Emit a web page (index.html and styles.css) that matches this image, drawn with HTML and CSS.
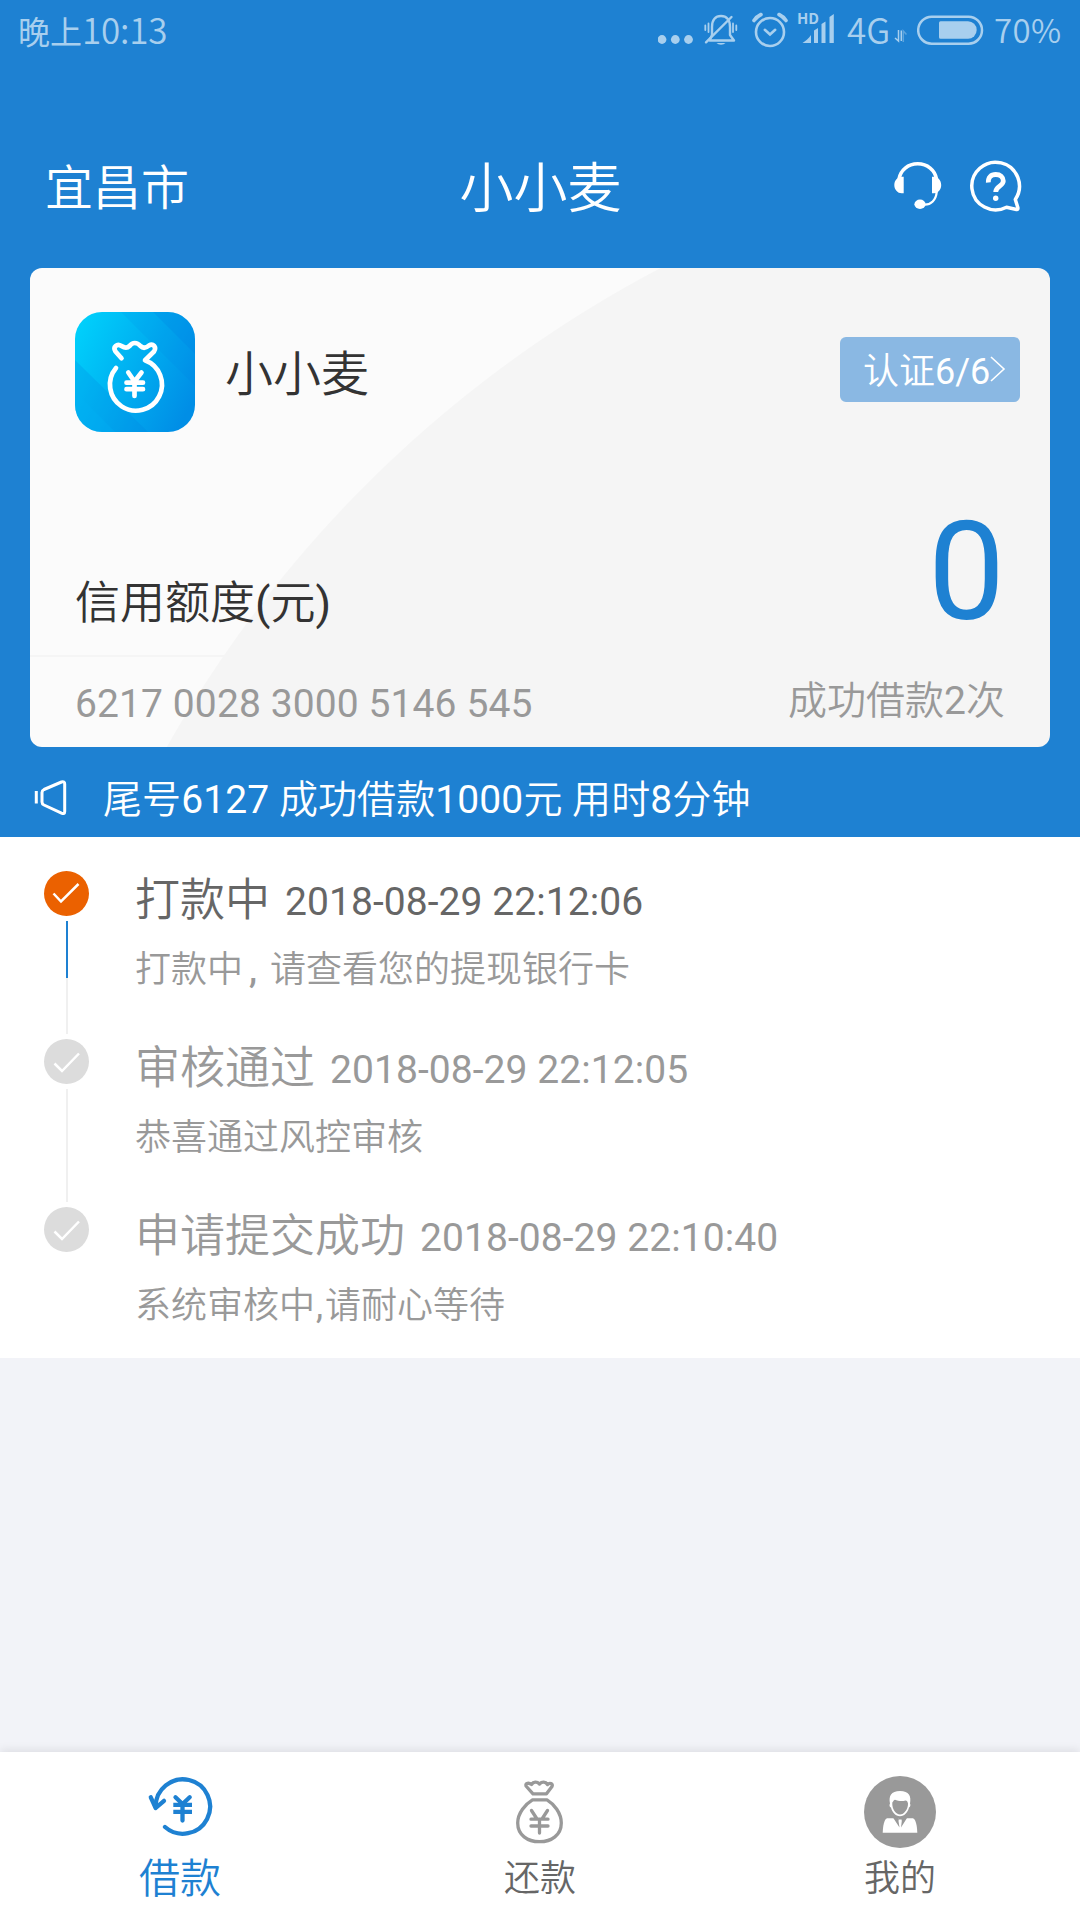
FILE: index.html
```html
<!DOCTYPE html>
<html lang="zh-CN">
<head>
<meta charset="utf-8">
<title>小小麦</title>
<link rel="stylesheet" href="styles.css">
</head>
<body>
<div class="app">
  <div class="status">
    <div class="clock">晚上<span class="digits">10:13</span></div>
    <div class="indicators">
      <svg class="ind-dots" width="36" height="60" viewBox="658 0 36 60" fill="currentColor"><circle cx="662" cy="39.5" r="4.4"/><circle cx="675.3" cy="39.5" r="4.4"/><circle cx="688.5" cy="39.5" r="4.4"/></svg>
      <svg class="ind-bell" width="34" height="60" viewBox="704 0 34 60" fill="none" stroke="currentColor" stroke-width="2.4" stroke-linecap="round"><path d="M709.5 40.5h24.5l-4-5.5V27c0-7-3.500-11-9-11s-9 4-9 11v8z" stroke-linejoin="round"/><path d="M706 42.300L731.500 17"/><path d="M716.500 43h9a5.200 3.500 0 0 1-9 0z" fill="currentColor" stroke="none"/><path d="M705.300 25.500v4.500M708.500 23.500v8.500M733 23.500v8.500M736.300 25.500v4.500" stroke-width="1.800"/></svg>
      <svg class="ind-alarm" width="36" height="60" viewBox="752 0 36 60" fill="none" stroke="currentColor" stroke-width="2.600" stroke-linecap="round"><circle cx="770" cy="32" r="14"/><path d="M764.800 29.800l5.200 4.700 5.200-4.700"/><path d="M754 20.500q2.800-4 7-6M786 20.500q-2.800-4-7-6" stroke-width="3.600"/></svg>
      <svg class="ind-signal" width="38" height="60" viewBox="797 0 38 60" fill="currentColor"><text class="hd" x="797" y="23.800">HD</text><path d="M802.500 43c3.500-2.500 6-4.500 8.500-8v8zM814 43V30.500l4-2.500v15zM821.500 43V24l4-2.500V43zM829.500 43V17l4.300-3v29z"/></svg>
      <span class="net">4G</span>
      <svg class="ind-data" width="13" height="60" viewBox="895 0 13 60" fill="none" stroke="currentColor" stroke-width="1.500"><path d="M899.500 30v11l-3.500-3M902.300 30.500V41"/><path d="M904.300 42V31l3.200 3.500" opacity=".45"/></svg>
      <svg class="ind-battery" width="67" height="60" viewBox="917 0 67 60"><rect x="918.200" y="16.700" width="63.800" height="27" rx="13.500" fill="none" stroke="currentColor" stroke-width="2.500"/><path d="M940.500 21.300H968a8.700 8.700 0 0 1 0 17.400h-27.500q-1.500 0-1.500-1.500V22.800q0-1.500 1.500-1.500z" fill="currentColor"/></svg>
      <span class="percent">70%</span>
    </div>
  </div>

  <header class="header">
    <span class="city">宜昌市</span>
    <h1 class="title">小小麦</h1>
    <div class="actions">
      <svg width="56" height="56" viewBox="0 0 56 56" fill="#fff"><path d="M9 21C10.500 12 18 5.800 27.700 5.800S45 12 46.500 21" fill="none" stroke="#fff" stroke-width="3.600"/><path d="M13.700 18.700v16.600h-2C7.500 35.300 4.300 31.500 4.300 27s3.200-8.300 7.400-8.300zM42 18.700v16.600h2c4.200 0 7.200-3.800 7.200-8.300s-3-8.300-7.200-8.300z"/><path d="M46.700 34C46 42 41 47 34 46.600" fill="none" stroke="#fff" stroke-width="2.300"/><ellipse cx="30" cy="46.300" rx="5.600" ry="4.700"/></svg>
      <svg width="60" height="60" viewBox="0 0 60 60" fill="none" stroke="#fff" stroke-linecap="round" stroke-linejoin="round"><path d="M49.300 43.400A23.800 23.800 0 1 0 40.500 51.200L50.500 53.500Q52.300 53.700 51.800 51.500Z" stroke-width="3.500"/><path d="M22.300 26.500C22 21.500 25 18.500 29.700 18.500C34.400 18.500 37.300 21 37.300 25C37.300 30 29.700 30.500 29.700 36" stroke-width="4.800" stroke-linecap="butt"/><circle cx="29.700" cy="42.300" r="2.700" fill="#fff" stroke="none"/></svg>
    </div>
  </header>

  <section class="card">
    <div class="card-top">
      <svg class="logo" width="120" height="120" viewBox="0 0 120 120">
        <defs>
          <linearGradient id="logoFill" x1="0" y1="0.200" x2="1" y2="0.700"><stop offset="0" stop-color="#00cffb"/><stop offset="1" stop-color="#008ee6"/></linearGradient>
          <clipPath id="logoClip"><rect width="120" height="120" rx="27"/></clipPath>
        </defs>
        <g clip-path="url(#logoClip)">
          <rect width="120" height="120" fill="url(#logoFill)"/>
          <path d="M0 48L73 120H0z" fill="#0080e0" opacity=".22"/><path d="M0 80L40 120H0z" fill="#00b4f5" opacity=".3"/>
          <path d="M46 0L120 74V0z" fill="#0078e0" opacity=".1"/><path d="M78 0L120 42V0z" fill="#0078e0" opacity=".2"/>
        </g>
        <g fill="none" stroke="#fff" stroke-width="4.700" stroke-linecap="round" stroke-linejoin="round">
          <path d="M41 56A26 26 0 1 0 70 48.300L79 39.500C82 35 78 31 74 33.500C71 36 68 36.500 65.500 34C62 30 57.500 30 54.500 34C52 36.500 49.500 36 46.500 34C42 31 37.500 35 40.500 39.500L46.500 46.300"/>
          <path d="M53.300 60.500L59.500 69.500L66.500 60.500M59.500 69.500V84M51.500 70.700H68M51.500 77.200H68"/>
        </g>
      </svg>
      <span class="name">小小麦</span>
      <a class="badge"><span>认证<b>6/6</b></span><svg width="16" height="26" viewBox="0 0 16 26" fill="none" stroke="#fff" stroke-width="1.600"><path d="M1 1l13 12L1 25"/></svg></a>
    </div>
    <div class="quota">
      <span class="quota-label">信用额度<b>(</b>元<b>)</b></span>
      <span class="quota-value">0</span>
    </div>
    <div class="divider"></div>
    <div class="card-foot">
      <span class="number">6217 0028 3000 5146 545</span>
      <span class="times">成功借款<b>2</b>次</span>
    </div>
  </section>

  <div class="notice">
    <svg width="36" height="44" viewBox="0 0 36 44" fill="none" stroke="#fff" stroke-width="3"><path d="M4.300 15v12.500"/><path d="M10 16.500Q10 14.500 12 13.500L29.500 6Q32.700 5 32.700 8V35.500Q32.700 38.500 29.500 37.200L12 29Q10 28 10 26Z" stroke-linejoin="round"/></svg>
    <span>尾号<b>6127</b> 成功借款<b>1000</b>元 用时<b>8</b>分钟</span>
  </div>

  <ol class="timeline">
    <li class="step current">
      <div class="rail"><svg class="mark" width="45" height="45" viewBox="0 0 45 45"><circle cx="22.500" cy="22.500" r="22.500"/><path d="M9.500 22.500l7.500 8L34.500 13"/></svg><i class="line"></i></div>
      <div class="body"><p class="head">打款中<time>2018-08-29 22:12:06</time></p><p class="desc">打款中<span class="comma">,</span>请查看您的提现银行卡</p></div>
    </li>
    <li class="step">
      <div class="rail"><svg class="mark" width="45" height="45" viewBox="0 0 45 45"><circle cx="22.500" cy="22.500" r="22.500"/><path d="M10.500 24.500l7.500 7.500L35 14.500"/></svg><i class="line"></i></div>
      <div class="body"><p class="head">审核通过<time>2018-08-29 22:12:05</time></p><p class="desc">恭喜通过风控审核</p></div>
    </li>
    <li class="step">
      <div class="rail"><svg class="mark" width="45" height="45" viewBox="0 0 45 45"><circle cx="22.500" cy="22.500" r="22.500"/><path d="M10.500 24.500l7.500 7.500L35 14.500"/></svg></div>
      <div class="body"><p class="head">申请提交成功<time>2018-08-29 22:10:40</time></p><p class="desc">系统审核中<span class="comma-narrow">,</span>请耐心等待</p></div>
    </li>
  </ol>

  <nav class="tabs">
    <a class="tab active">
      <svg width="72" height="72" viewBox="0 0 72 72" fill="none" stroke="currentColor" stroke-width="4.300" stroke-linecap="round"><path d="M11.700 31A27.200 27.200 0 1 1 21 51"/><path d="M6.800 21.300L11.700 32L20 24.800" stroke-linejoin="round"/><path d="M31.500 21.300L38.500 28L45.700 21.300M38.500 28V44.500"/><path d="M29.300 28.800H48M29.300 35.800H48" stroke-linecap="butt"/></svg>
      <span>借款</span>
    </a>
    <a class="tab">
      <svg width="72" height="72" viewBox="0 0 72 72" fill="none" stroke="#999" stroke-width="3.300" stroke-linecap="round" stroke-linejoin="round"><path d="M29 17.800H42.500L48 10.500C49.500 7.500 45.500 6.500 43.500 8.500C41.500 5.500 38 5.500 35.500 8C33 5.500 29.500 5.500 27.500 8.500C25 6.500 21 7 22 10Z"/><path d="M28.500 23.800H43C50 28 57.300 37 57.300 47C57.300 59 47.500 65.700 35.500 65.700S13.700 59 13.700 47C13.700 37 21.500 28 28.500 23.800Z"/><path d="M27.500 34.500L33 43M43.500 34.500L38 43M35.500 44V57M27 43.200H44M27 50H44"/></svg>
      <span>还款</span>
    </a>
    <a class="tab">
      <svg width="72" height="72" viewBox="0 0 72 72" fill="#fff"><circle cx="36" cy="36" r="36" fill="#999"/><path d="M26 27.500C24.500 20 27 15 36 15S47.500 20 46 27.500C47 29 46 31 45 31.500C44 36 40.500 40.300 36 40.300S28 36 27 31.500C25.500 31 25 29 26 27.500Z"/><path d="M28.300 26.500C29.500 25 30 24 31 23.800C34 25 38 25.500 41.500 24.500C43 24.500 43.500 25.500 44 27.500C44.300 33 40 38.600 36 38.600S27.800 33 28.300 26.500Z" fill="#999"/><path d="M18.700 56.700C19 50 20 43.500 23 42.200H49C52 43.500 53 50 53.300 56.700Z"/><path d="M29.300 42L35.500 51.500L34.500 45L35 42zM43 42L37 51.500L37.800 45L37.300 42zM34.800 42h2.700l.2 1.500h-3z" fill="#999"/></svg>
      <span>我的</span>
    </a>
  </nav>
</div>
</body>
</html>
```
FILE: styles.css
```css
* { box-sizing: border-box; margin: 0; padding: 0; }

body {
  background: #f2f3f8;
  font-family: Roboto, "Noto Sans CJK SC", sans-serif;
  font-weight: 350;
  color: #333;
}

.app {
  width: 1080px;
  height: 1920px;
  display: flex;
  flex-direction: column;
  background: linear-gradient(#1e81d2 837px, #f2f3f8 837px);
}

.app svg { display: block; flex: none; }

/* Latin digits and brackets inside Chinese text */
b { font-weight: 400; }

.status {
  height: 60px;
  display: flex;
  justify-content: space-between;
  padding: 0 18px;
  color: #a8cfee;
  font-family: "Noto Sans CJK SC", sans-serif;
  white-space: nowrap;
}
.clock { font-size: 32px; line-height: 58px; font-weight: 400; }
.digits { font-size: 35px; font-weight: 350; letter-spacing: -.2px; }
.indicators { display: flex; font-size: 33px; line-height: 58px; }
.ind-bell { margin-left: 10px; }
.ind-alarm { margin-left: 14px; }
.ind-signal { margin-left: 9px; overflow: visible; }
.hd { font: 700 15px "Noto Sans CJK SC", sans-serif; }
.net { width: 47px; margin-left: 12px; font-size: 35px; }
.ind-battery { margin-left: 10px; }
.percent { width: 68px; margin-left: 10px; letter-spacing: .4px; }

.header {
  height: 160px;
  margin-top: 48px;
  display: grid;
  grid-template-columns: 1fr auto 1fr;
  align-items: center;
  padding: 0 54px 0 45px;
  color: #fff;
}
.city { font-size: 48px; line-height: 60px; padding-top: 2px; }
.title { font-size: 54px; line-height: 60px; font-weight: 350; padding: 4px 0 0 10px; }
.actions { display: flex; align-items: center; justify-content: flex-end; gap: 20px; padding-bottom: 5px; }

.card {
  height: 479px;
  margin: 0 30px;
  border-radius: 12px;
  background: radial-gradient(circle at 1195px 1076px, #f5f5f5 1214.500px, #fbfbfb 1215.500px);
  display: flex;
  flex-direction: column;
}
.card-top { display: flex; align-items: center; height: 120px; margin: 44px 30px 0 45px; }
.name { font-size: 48px; line-height: 60px; margin-left: 30px; padding-top: 5px; }
.badge {
  width: 180px;
  height: 65px;
  margin: 0 0 5px auto;
  padding-left: 23px;
  border-radius: 6px;
  background: #8ab8e3;
  display: flex;
  align-items: center;
  color: #fff;
  font-size: 36px;
  line-height: 60px;
}
.badge span { padding-top: 4px; }
.badge svg { margin: 0 0 2px 0; }
.quota { display: flex; align-items: baseline; justify-content: space-between; margin: 60px 45px 0; height: 163px; line-height: 160px; }
.quota-label { font-size: 45px; }
.quota-value { font-size: 137px; font-weight: 400; color: #1e81d2; }
.divider { width: 194px; height: 2px; background: #f5f5f5; }
.card-foot { display: flex; justify-content: space-between; margin: 0 45px; color: #999; font-size: 39px; line-height: 60px; }
.number { padding-top: 17px; font-weight: 400; letter-spacing: .1px; }
.times { padding-top: 14px; }

.notice {
  height: 90px;
  display: flex;
  align-items: center;
  gap: 35px;
  padding: 0 32px 0;
  color: #fff;
  font-size: 39px;
  letter-spacing: .1px;
}
.notice span { padding-top: 16px; line-height: 60px; }
.notice svg { margin-top: 11px; }

.timeline { list-style: none; height: 521px; padding: 34px 44px 0; background: #fff; }
.step { display: flex; height: 168px; color: #999; }
.rail { width: 45px; display: flex; flex-direction: column; align-items: center; }
.mark circle { fill: #dcdcdc; }
.mark path { fill: none; stroke: #fff; stroke-width: 2.500; }
.line { width: 2px; height: 113px; margin-top: 5px; background: #f0f0f0; }
.current .mark circle { fill: #eb6100; }
.current .line { background: linear-gradient(#1e81d2 57px, #f0f0f0 57px); }
.body { margin-left: 46px; white-space: nowrap; }
.head { font-size: 45px; line-height: 60px; }
.head time { font-size: 39px; font-weight: 400; margin-left: 15px; letter-spacing: .06px; vertical-align: 1px; }
.desc { font-size: 36px; line-height: 60px; margin-top: 8px; }
.comma { display: inline-block; width: 27px; padding-left: 6px; font-weight: 500; }
.comma-narrow { display: inline-block; width: 10px; padding-left: 1px; font-weight: 400; }
.current .head { color: #666; }

.tabs {
  height: 168px;
  margin-top: auto;
  padding-top: 24px;
  display: grid;
  grid-template-columns: repeat(3, 1fr);
  background: #fff;
  box-shadow: 0 -2px 9px rgba(0, 0, 0, .09);
  color: #666;
  font-size: 36px;
}
.tab { display: flex; flex-direction: column; align-items: center; }
.tab span { line-height: 48px; margin-top: 7px; }
.active { color: #1e81d2; font-size: 41px; }
```
